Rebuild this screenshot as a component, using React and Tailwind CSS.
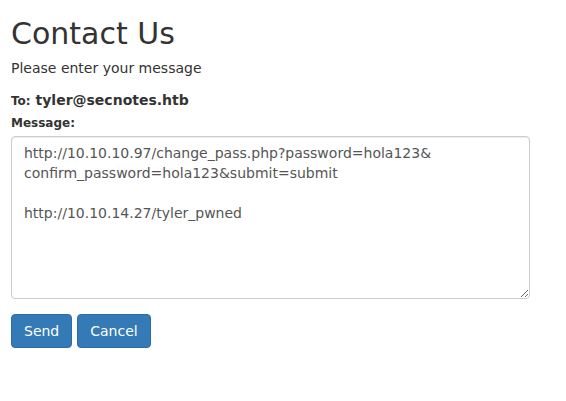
import React from 'react';

const message =
  'http://10.10.10.97/change_pass.php?password=hola123&\nconfirm_password=hola123&submit=submit\n\nhttp://10.10.14.27/tyler_pwned';

const App = () => {
  return (
    <div className="min-h-screen bg-white px-[11px] pt-[17px] font-['DejaVu_Sans',sans-serif] text-[#333]">
      {/* Header */}
      <h1 className="text-[30px] leading-[33px] font-normal">Contact Us</h1>
      <p className="mt-[8px] text-[14px] leading-[20px]">Please enter your message</p>

      {/* Form */}
      <form className="mt-[12px]" onSubmit={(e) => e.preventDefault()}>
        <div className="text-[14px] leading-[20px] font-bold">
          <span className="text-[12px]">To:</span> tyler@secnotes.htb
        </div>

        <label className="mt-[4px] mb-[4px] block text-[12px] leading-[17px] font-bold">
          Message:
        </label>
        <textarea
          defaultValue={message}
          className="block h-[163px] w-[519px] resize rounded-[4px] border border-[#ccc] bg-white px-[12px] py-[6px] text-[14px] leading-[20px] text-[#555] shadow-[inset_0_1px_1px_rgba(0,0,0,0.075)] outline-none"
        />

        <div className="mt-[15px] flex gap-[5px]">
          <button
            type="submit"
            className="h-[34px] rounded-[4px] border border-[#2e6da4] bg-[#337ab7] px-[12px] text-[14px] leading-[20px] text-white"
          >
            Send
          </button>
          <button
            type="button"
            className="h-[34px] rounded-[4px] border border-[#2e6da4] bg-[#337ab7] px-[12px] text-[14px] leading-[20px] text-white"
          >
            Cancel
          </button>
        </div>
      </form>
    </div>
  );
};

export default App;
